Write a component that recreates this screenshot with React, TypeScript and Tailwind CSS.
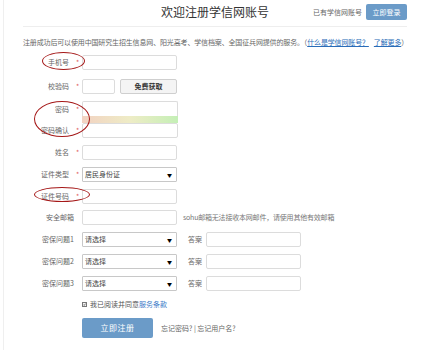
import React from 'react'

const font = {fontFamily: '"Noto Sans CJK SC", "Noto Sans", sans-serif'}

type LabelProps = { text: string; required?: boolean }

const Label: React.FC<LabelProps> = ({text, required}) => (
    <div className='w-[59px] shrink-0 flex justify-end items-center text-[7px] text-[#666]'>
        <span>{text}</span>
        {required ? (
            <span className='text-[#e06060] ml-[7px] mr-[3px] w-[3px]'>*</span>
        ) : (
            <span className='mr-[8px]'/>
        )}
    </div>
)

const Input: React.FC<{ w?: string }> = ({w = 'w-[95px]'}) => (
    <div className={`${w} h-[15px] border border-[#dcdcdc] rounded-[2px] bg-white`}/>
)

const Select: React.FC<{ text: string }> = ({text}) => (
    <div className='w-[95px] h-[15px] border border-[#c8c8c8] rounded-[1px] bg-white flex items-center justify-between px-[2px] text-[7px] text-[#444]'>
        <span>{text}</span>
        <span className='text-[5px] mr-[2px] text-black'>▼</span>
    </div>
)

const QuestionRow: React.FC<{ n: number }> = ({n}) => (
    <div className='flex items-center'>
        <Label text={`密保问题${n}`}/>
        <Select text='请选择'/>
        <span className='ml-[11px] mr-[4px] text-[7px] text-[#666]'>答案</span>
        <Input/>
    </div>
)

const App: React.FC = () => {
    return (
        <div className='w-[438px] h-[350px] bg-white overflow-hidden' style={font}>
            <div className='ml-[3px] h-full border-l border-[#efefef] relative'>
                <div className='pl-[19px] w-[403px]'>
                    <div className='pt-[4px] grid grid-cols-[1fr_auto_1fr] items-center h-[20px]'>
                        <div/>
                        <h1 className='text-[12px] text-[#333] leading-none'>欢迎注册学信网账号</h1>
                        <div className='flex justify-end items-center'>
                            <span className='text-[7px] text-[#666] mr-[4px]'>已有学信网账号</span>
                            <button className='w-[41px] h-[16px] bg-[#6b9bc8] text-white text-[7px] rounded-[2px]'>
                                立即登录
                            </button>
                        </div>
                    </div>
                    <div className='mt-[6px] border-t border-[#eeeeee]'/>
                    <p className='mt-[10px] h-[10px] leading-[10px] text-[7px] text-[#666] whitespace-nowrap tracking-[-0.15px]'>
                        注册成功后可以使用中国研究生招生信息网、阳光高考、学信档案、全国征兵网提供的服务。（
                        <a className='text-[#2a6cb8] underline'>什么是学信网账号？</a>
                        <span className='ml-[5px]'/>
                        <a className='text-[#2a6cb8] underline'>了解更多</a>）
                    </p>

                    <div className='mt-[8px] flex flex-col gap-[7px]'>
                        <div className='flex items-center'>
                            <Label text='手机号' required/>
                            <Input/>
                        </div>
                        <div className='flex items-center mt-[2px]'>
                            <Label text='校验码' required/>
                            <Input w='w-[33px]'/>
                            <button className='ml-[5px] w-[57px] h-[15px] border border-[#cfcfcf] bg-[#f4f4f4] rounded-[2px] text-[7px] font-semibold text-[#333]'>
                                免费获取
                            </button>
                        </div>
                        <div className='flex'>
                            <div className='flex flex-col justify-between py-[3px]'>
                                <Label text='密码' required/>
                                <Label text='密码确认' required/>
                            </div>
                            <div className='flex flex-col w-[96px]'>
                                <div className='h-[15px] border border-b-0 border-[#dcdcdc] rounded-t-[2px]'/>
                                <div className='h-[7px] bg-gradient-to-r from-[#f2d2c2] via-[#eeecc6] to-[#c4efb6]'/>
                                <div className='h-[15px] border border-[#dcdcdc] rounded-[2px]'/>
                            </div>
                        </div>
                        <div className='flex items-center'>
                            <Label text='姓名' required/>
                            <Input/>
                        </div>
                        <div className='flex items-center'>
                            <Label text='证件类型' required/>
                            <Select text='居民身份证'/>
                        </div>
                        <div className='flex items-center'>
                            <Label text='证件号码' required/>
                            <Input/>
                        </div>
                        <div className='flex items-center -mt-[1px]'>
                            <Label text='安全邮箱'/>
                            <Input/>
                            <span className='ml-[6px] text-[7px] text-[#777] tracking-[-0.2px]'>
                                sohu邮箱无法接收本网邮件，请使用其他有效邮箱
                            </span>
                        </div>
                        <QuestionRow n={1}/>
                        <QuestionRow n={2}/>
                        <QuestionRow n={3}/>
                        <div className='flex items-center mt-[1px] h-[10px] pl-[59px] text-[7px] text-[#555]'>
                            <span className='w-[5px] h-[5px] border border-[#777] bg-[#f4f4f4] mr-[3px] flex items-center justify-center'>
                                <svg viewBox='0 0 10 10' className='w-[5px] h-[5px]'>
                                    <path d='M1.5 5.5 L4 8 L8.5 2' fill='none' stroke='#222' strokeWidth='2'/>
                                </svg>
                            </span>
                            <span>我已阅读并同意</span>
                            <a className='text-[#3b7bc8]'>服务条款</a>
                        </div>
                        <div className='flex items-center mt-[2px] pl-[59px]'>
                            <button className='w-[71px] h-[20px] bg-[#6b9bc8] text-white text-[8px] rounded-[2px] tracking-[0.5px]'>
                                立即注册
                            </button>
                            <span className='ml-[8px] text-[7px] text-[#666]'>忘记密码? | 忘记用户名?</span>
                        </div>
                    </div>
                </div>

                <div className='absolute left-[38px] top-[52px] w-[43px] h-[18px] rounded-[50%] border-[1.5px] border-[#a51818]'/>
                <div className='absolute left-[30px] top-[101px] w-[56px] h-[36px] rounded-[50%] border-[1.5px] border-[#a51818]'/>
                <div className='absolute left-[30px] top-[187px] w-[56px] h-[15px] rounded-[50%] border-[1.5px] border-[#a51818]'/>
            </div>
        </div>
    )
}

export default App
